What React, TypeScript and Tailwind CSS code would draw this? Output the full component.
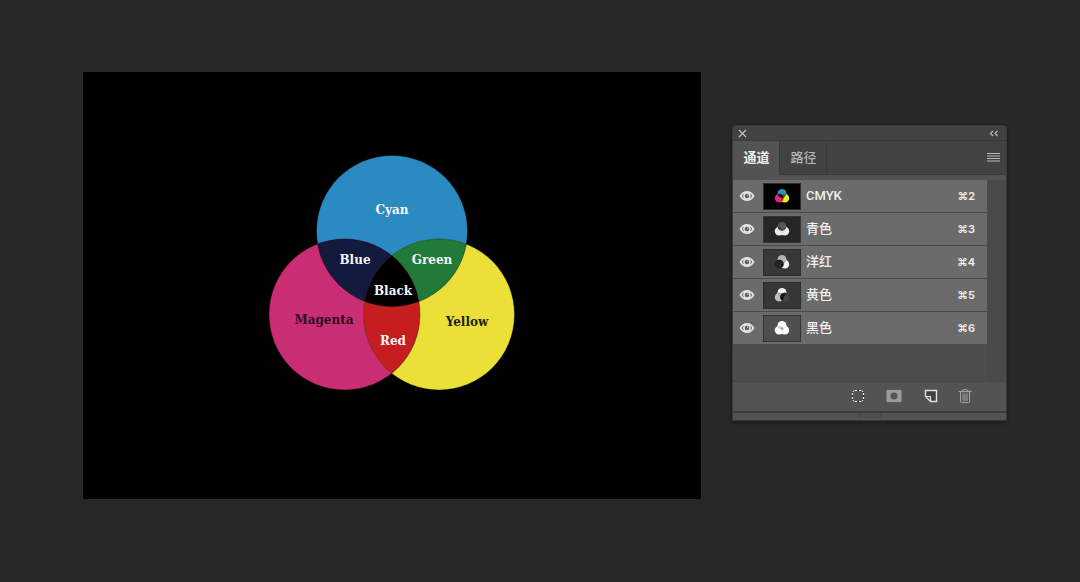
import { useId, useState } from 'react'
import clsx from 'clsx'

type Inks = {
  cyan: string
  magenta: string
  yellow: string
  blue: string
  green: string
  red: string
  black: string
}

type Channel = {
  id: string
  name: string
  shortcut: string
  background: string
  frame: string
  inks: Inks
}

const fullColor: Inks = {
  cyan: '#2b8ac1',
  magenta: '#c92d74',
  yellow: '#eae037',
  blue: '#131a3d',
  green: '#217a38',
  red: '#c41e20',
  black: '#000000'
}

const channels: Channel[] = [
  {
    id: 'cmyk',
    name: 'CMYK',
    shortcut: '⌘2',
    background: '#000000',
    frame: '#2c2c2c',
    inks: { ...fullColor, magenta: '#e6237f', yellow: '#f5e82c', cyan: '#2d8fc6' }
  },
  {
    id: 'cyan',
    name: '青色',
    shortcut: '⌘3',
    background: '#262626',
    frame: '#353535',
    inks: { cyan: '#555555', magenta: '#ededed', yellow: '#ededed', blue: '#2e2e2e', green: '#4c4c4c', red: '#e4e4e4', black: '#303030' }
  },
  {
    id: 'magenta',
    name: '洋红',
    shortcut: '⌘4',
    background: '#383838',
    frame: '#2c2c2c',
    inks: { cyan: '#b4b4b4', magenta: '#222222', yellow: '#f2f2f2', blue: '#1c1c1c', green: '#b0b0b0', red: '#080808', black: '#2a2a2a' }
  },
  {
    id: 'yellow',
    name: '黄色',
    shortcut: '⌘5',
    background: '#363636',
    frame: '#2c2c2c',
    inks: { cyan: '#f2f2f2', magenta: '#bdbdbd', yellow: '#444444', blue: '#a8a8a8', green: '#1e1e1e', red: '#0c0c0c', black: '#161616' }
  },
  {
    id: 'black',
    name: '黑色',
    shortcut: '⌘6',
    background: '#4f4f4f',
    frame: '#333333',
    inks: { cyan: '#ffffff', magenta: '#ffffff', yellow: '#ffffff', blue: '#d4d4d4', green: '#f4f4f4', red: '#f4f4f4', black: '#a0a0a0' }
  }
]

const labels = [
  { text: 'Cyan', x: 309, y: 142, fill: '#f4f7f8' },
  { text: 'Blue', x: 272, y: 192, fill: '#f4f7f8' },
  { text: 'Green', x: 349, y: 192, fill: '#f4f7f8' },
  { text: 'Black', x: 310, y: 223, fill: '#f4f7f8' },
  { text: 'Magenta', x: 241, y: 252, fill: '#2b0b1c' },
  { text: 'Yellow', x: 384, y: 254, fill: '#1f1d0c' },
  { text: 'Red', x: 310, y: 273, fill: '#f4f7f8' }
]

function InkCircles({ inks, outlined }: { inks: Inks; outlined?: boolean }) {
  const id = useId()
  const c = { cx: 309, cy: 159, r: 75.5 }
  const m = { cx: 261.5, cy: 242.5, r: 75.5 }
  const y = { cx: 356, cy: 242.5, r: 75.5 }

  return (
    <g>
      <defs>
        <clipPath id={`${id}-m`}>
          <circle {...m} />
        </clipPath>
        <clipPath id={`${id}-y`}>
          <circle {...y} />
        </clipPath>
      </defs>
      <circle {...c} fill={inks.cyan} />
      <circle {...m} fill={inks.magenta} />
      <circle {...y} fill={inks.yellow} />
      <circle {...c} fill={inks.blue} clipPath={`url(#${id}-m)`} />
      <circle {...c} fill={inks.green} clipPath={`url(#${id}-y)`} />
      <circle {...y} fill={inks.red} clipPath={`url(#${id}-m)`} />
      <g clipPath={`url(#${id}-y)`}>
        <circle {...c} fill={inks.black} clipPath={`url(#${id}-m)`} />
      </g>
      {outlined && (
        <g fill="none" stroke="#000" strokeOpacity="0.35">
          <circle {...c} />
          <circle {...m} />
          <circle {...y} />
        </g>
      )}
    </g>
  )
}

function Artwork() {
  return (
    <svg viewBox="0 0 618 427" className="block h-auto w-full bg-black" role="img" aria-label="CMYK">
      <InkCircles inks={fullColor} outlined />
      <g className="font-['DejaVu_Serif',serif] text-[12px] font-bold" textAnchor="middle">
        {labels.map((label) => (
          <text key={label.text} x={label.x} y={label.y} fill={label.fill}>
            {label.text}
          </text>
        ))}
      </g>
    </svg>
  )
}

function EyeIcon() {
  return (
    <svg viewBox="0 0 16 12" className="h-3 w-4" aria-hidden="true">
      <path d="M.5 6C2.400 2.600 5 1 8 1S13.600 2.600 15.500 6C13.600 9.400 11 11 8 11S2.400 9.400.5 6Z" fill="#e2e2e2" />
      <path d="M2.800 6.100C3.400 5 4 4.200 4.900 3.600A4.300 4.300 0 0 0 4.900 8.500C4 7.900 3.400 7.200 2.800 6.100ZM13.200 6.100C12.600 5 12 4.200 11.100 3.600A4.300 4.300 0 0 1 11.100 8.500C12 7.900 12.600 7.200 13.200 6.100Z" fill="#6b6b6b" />
      <circle cx="8" cy="6" r="2.300" fill="#606060" />
      <circle cx="8.700" cy="5.300" r="0.700" fill="#c8c8c8" />
    </svg>
  )
}

function ChannelRow({ channel }: { channel: Channel }) {
  const [visible, setVisible] = useState(true)

  return (
    <li className="flex h-[33px] items-center border-b border-[#4a4a4a] bg-[#6b6b6b]">
      <button
        type="button"
        aria-label={channel.name}
        aria-pressed={visible}
        onClick={() => setVisible(!visible)}
        className="flex h-full w-[30px] items-center justify-center pr-0.5"
      >
        {visible && <EyeIcon />}
      </button>
      <button type="button" className="flex h-full flex-1 items-center text-left">
        <svg
          viewBox="0 0 618 427"
          preserveAspectRatio="xMidYMid slice"
          className="h-[27px] w-[38px] border"
          style={{ backgroundColor: channel.background, borderColor: channel.frame }}
          aria-hidden="true"
        >
          <InkCircles inks={channel.inks} />
        </svg>
        <span className="ml-[5px] flex-1 text-[13px] leading-5 font-medium text-[#f0f0f0]">{channel.name}</span>
        <span className="pr-3 font-['Inter',sans-serif] text-[11px] leading-5 font-semibold text-[#f0f0f0]">
          {channel.shortcut}
        </span>
      </button>
    </li>
  )
}

function PanelTabs() {
  const [active, setActive] = useState('通道')

  return (
    <div className="flex h-[34px] bg-[#424242]">
      <div role="tablist" className="flex">
        {['通道', '路径'].map((tab) => (
          <button
            key={tab}
            type="button"
            role="tab"
            aria-selected={active === tab}
            onClick={() => setActive(tab)}
            className={clsx(
              'w-[47px] border-r border-[#383838] pl-px text-[13px] leading-5',
              active === tab ? 'bg-[#535353] font-bold text-[#f0f0f0]' : 'border-b font-medium text-[#b4b4b4]'
            )}
          >
            {tab}
          </button>
        ))}
      </div>
      <div className="flex flex-1 items-center justify-end border-b border-[#383838] pr-1.5 pb-0.5">
        <button type="button" aria-label="菜单">
          <svg viewBox="0 0 13 10" className="block h-2.5 w-[13px]" aria-hidden="true">
            <path d="M0 1.500h13M0 4h13M0 6.500h13M0 9h13" stroke="#b8b8b8" strokeWidth="1.200" />
          </svg>
        </button>
      </div>
    </div>
  )
}

function PanelFooter() {
  return (
    <div className="flex h-[30px] items-center justify-end gap-5 border-t border-[#464646] bg-[#535353] pr-[34px] pb-0.5">
      <button type="button" aria-label="将通道作为选区载入" className="mr-px">
        <svg viewBox="0 0 14 14" className="block size-3.5" fill="none" aria-hidden="true">
          <rect x="1.500" y="1.500" width="11" height="11" rx="2" stroke="#2e2e2e" strokeWidth="1.200" />
          <path
            d="M3.500 1.500h2.500M8 1.500h2.500M3.500 12.500h2.500M8 12.500h2.500M1.500 4v2M1.500 8v2M12.500 4v2M12.500 8v2M1.800 2.800l1-1M11.200 1.800l1 1M1.800 11.200l1 1M11.200 12.200l1-1"
            stroke="#efefef"
            strokeWidth="1.200"
          />
        </svg>
      </button>
      <button type="button" aria-label="将选区存储为通道">
        <svg viewBox="0 0 16 12" className="block h-3 w-4" aria-hidden="true">
          <rect width="15" height="12" x="0.500" fill="#9b9b9b" />
          <circle cx="8" cy="6" r="3.500" fill="#535353" />
        </svg>
      </button>
      <button type="button" aria-label="创建新通道" className="ml-0.5">
        <svg viewBox="0 0 14 14" className="block size-3.5" fill="none" aria-hidden="true">
          <path d="M1.500 1.500h11v11H6.500L1.500 7.500Z" fill="#414141" />
          <path d="M1.500 7.500v-6h11v11h-6" stroke="#e4e4e4" strokeWidth="1.400" />
          <path d="M1.500 7.500h5v5Z" fill="#505050" stroke="#e4e4e4" strokeWidth="1.200" strokeLinejoin="round" />
        </svg>
      </button>
      <button type="button" aria-label="删除当前通道">
        <svg viewBox="0 0 14 16" className="block h-4 w-3.5" fill="none" stroke="#a4a4a4" aria-hidden="true">
          <path d="M.5 3.500h13" strokeWidth="1.300" />
          <path d="M4.500 3.500v-1q0-1 1-1h3q1 0 1 1v1M2.500 4v9.500q0 1 1 1h7q1 0 1-1V4M5 5.500v7.500M7 5.500v7.500M9 5.500v7.500" />
        </svg>
      </button>
    </div>
  )
}

function ChannelsPanel() {
  return (
    <section
      aria-label="通道"
      className="w-[275px] shrink-0 overflow-hidden rounded-t border border-[#3a3a3a] bg-[#535353] shadow-[0_1px_4px_rgba(0,0,0,0.45)]"
    >
      <div className="flex h-[15px] items-center justify-between border-b border-[#383838] bg-[#424242] pr-[7px] pl-[5px]">
        <button type="button" aria-label="关闭">
          <svg viewBox="0 0 9 9" className="block size-[9px]" aria-hidden="true">
            <path d="M1 1l7 7M8 1L1 8" stroke="#c4c4c4" strokeWidth="1.200" />
          </svg>
        </button>
        <button type="button" aria-label="折叠">
          <svg viewBox="0 0 10 7" className="block h-[7px] w-2.5" fill="none" aria-hidden="true">
            <path d="M4 1L1.500 3.500 4 6M8.500 1L6 3.500 8.500 6" stroke="#c4c4c4" strokeWidth="1.100" />
          </svg>
        </button>
      </div>
      <PanelTabs />
      <div className="mt-[5px] flex min-h-[201px] bg-[#4d4d4d]">
        <ul className="flex-1">
          {channels.map((channel) => (
            <ChannelRow key={channel.id} channel={channel} />
          ))}
        </ul>
        <div className="w-[19px] bg-[#4a4a4a]" />
      </div>
      <PanelFooter />
      <div className="flex h-[9px] justify-center border-t-2 border-[#3b3b3b] bg-[#535353]">
        <svg viewBox="0 0 24 5" className="h-[5px] w-6" aria-hidden="true">
          <path d="M.5 0v5M2.500 0v5M4.500 0v5M6.500 0v5M8.500 0v5M10.500 0v5M12.500 0v5M14.500 0v5M16.500 0v5M18.500 0v5M20.500 0v5M22.500 0v5" stroke="#484848" />
        </svg>
      </div>
    </section>
  )
}

export default function App() {
  return (
    <main className="flex min-h-screen items-start gap-[31px] bg-[#282828] pt-[72px] pr-[73px] pl-[83px] font-['Roboto','Noto_Sans_CJK_SC',sans-serif]">
      <div className="min-w-0 flex-1">
        <Artwork />
      </div>
      <div className="pt-[53px]">
        <ChannelsPanel />
      </div>
    </main>
  )
}
